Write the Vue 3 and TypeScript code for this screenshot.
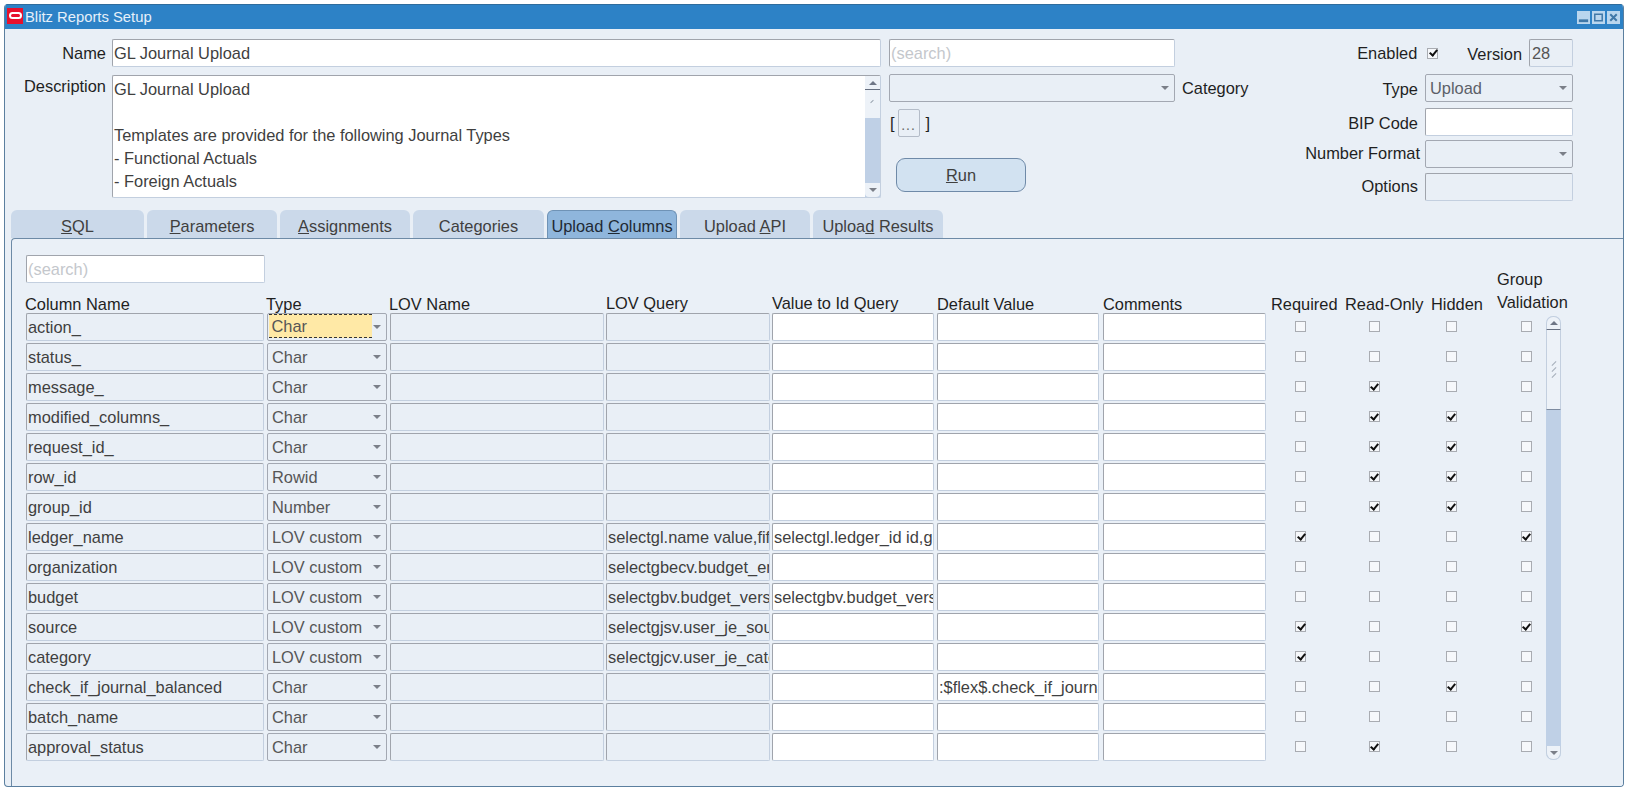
<script setup lang="ts">
interface Row { name: string; type: string; q?: string; v?: string; d?: string; req?: boolean; ro?: boolean; hid?: boolean; grp?: boolean; focus?: boolean }
const rows: Row[] = [
  { name: 'action_', type: 'Char', focus: true },
  { name: 'status_', type: 'Char' },
  { name: 'message_', type: 'Char', ro: true },
  { name: 'modified_columns_', type: 'Char', ro: true, hid: true },
  { name: 'request_id_', type: 'Char', ro: true, hid: true },
  { name: 'row_id', type: 'Rowid', ro: true, hid: true },
  { name: 'group_id', type: 'Number', ro: true, hid: true },
  { name: 'ledger_name', type: 'LOV custom', q: 'selectgl.name value,fifs.id_flex_num', v: 'selectgl.ledger_id id,gl.name value', req: true, grp: true },
  { name: 'organization', type: 'LOV custom', q: 'selectgbecv.budget_entity_name value' },
  { name: 'budget', type: 'LOV custom', q: 'selectgbv.budget_version_id', v: 'selectgbv.budget_version_id id' },
  { name: 'source', type: 'LOV custom', q: 'selectgjsv.user_je_source_name', req: true, grp: true },
  { name: 'category', type: 'LOV custom', q: 'selectgjcv.user_je_category_name', req: true },
  { name: 'check_if_journal_balanced', type: 'Char', d: ':$flex$.check_if_journal_balanced', hid: true },
  { name: 'batch_name', type: 'Char' },
  { name: 'approval_status', type: 'Char', ro: true },
]
const tabs = [
  { pre: '', key: 'S', post: 'QL' },
  { pre: '', key: 'P', post: 'arameters' },
  { pre: '', key: 'A', post: 'ssignments' },
  { pre: 'Categories', key: '', post: '' },
  { pre: 'Upload ', key: 'C', post: 'olumns', active: true },
  { pre: 'Upload ', key: 'A', post: 'PI' },
  { pre: 'Uploa', key: 'd', post: ' Results' },
]
</script>

<template>
  <div class="window">
    <header class="titlebar">
      <span class="logo"><i></i></span>
      <span class="title">Blitz Reports Setup</span>
      <span class="controls">
        <svg width="13" height="13" viewBox="0 0 14 14"><rect width="14" height="14" fill="#b9d6ee"/><rect x="2" y="9" width="10" height="3" fill="#3f78a8"/></svg>
        <svg width="13" height="13" viewBox="0 0 14 14"><rect width="14" height="14" fill="#b9d6ee"/><rect x="3" y="3.5" width="8" height="7" fill="none" stroke="#3f78a8" stroke-width="1.6"/></svg>
        <svg width="13" height="13" viewBox="0 0 14 14"><rect width="14" height="14" fill="#b9d6ee"/><path d="M3.5 3.5l7 7M10.5 3.5l-7 7" stroke="#3f78a8" stroke-width="2.2"/></svg>
      </span>
    </header>

    <section class="form">
      <div class="left">
        <div class="name-row">
          <label class="lbl name-lbl">Name</label>
          <div class="f white name-f">GL Journal Upload</div>
        </div>
        <div class="desc-row">
          <label class="lbl desc-lbl">Description</label>
          <div class="textarea">
            <div class="ta-text">
              <div>GL Journal Upload</div>
              <div class="ta-gap">Templates are provided for the following Journal Types</div>
              <div>- Functional Actuals</div>
              <div>- Foreign Actuals</div>
            </div>
            <div class="ta-scroll">
              <span class="sb-btn up"><i class="arrow-up"></i></span>
              <span class="sb-thumb"><i></i></span>
              <span class="sb-track"></span>
              <span class="sb-btn down"><i class="arrow-down"></i></span>
            </div>
          </div>
        </div>
      </div>

      <div class="mid">
        <div class="f white search">(search)</div>
        <div class="cat-row">
          <div class="f sel cat-sel"><i class="arrow-down"></i></div>
          <label class="lbl cat-lbl">Category</label>
        </div>
        <div class="flex-row">
          <span>[</span><span class="dots">...</span><span class="close">]</span>
        </div>
        <button class="run"><u>R</u>un</button>
      </div>

      <div class="right">
        <div class="r-row top-row">
          <label class="lbl en-lbl">Enabled</label>
          <span class="cb on en-cb"></span>
          <label class="lbl ver-lbl">Version</label>
          <div class="f ver">28</div>
        </div>
        <div class="r-row type-row">
          <label class="lbl">Type</label>
          <div class="f sel r-f">Upload<i class="arrow-down"></i></div>
        </div>
        <div class="r-row bip-row">
          <label class="lbl">BIP Code</label>
          <div class="f white r-f"></div>
        </div>
        <div class="r-row nf-row">
          <label class="lbl nf-lbl">Number Format</label>
          <div class="f sel r-f"><i class="arrow-down"></i></div>
        </div>
        <div class="r-row opt-row">
          <label class="lbl">Options</label>
          <div class="f r-f"></div>
        </div>
      </div>
    </section>

    <nav class="tabs">
      <div v-for="(t, i) in tabs" :key="i" class="tab" :class="{ active: t.active }">{{ t.pre }}<u v-if="t.key">{{ t.key }}</u>{{ t.post }}</div>
    </nav>

    <section class="panel">
      <div class="f white search2">(search)</div>
      <div class="grid-wrap">
        <div class="grid">
          <div class="head">
            <span class="h c-name">Column Name</span>
            <span class="h c-type">Type</span>
            <span class="h c-lov">LOV Name</span>
            <span class="h c-q up2">LOV Query</span>
            <span class="h c-v up2">Value to Id Query</span>
            <span class="h c-d">Default Value</span>
            <span class="h c-c">Comments</span>
            <span class="h c-req">Required</span>
            <span class="h c-ro">Read-Only</span>
            <span class="h c-hid">Hidden</span>
            <span class="h c-grp">Group<br />Validation</span>
          </div>
          <div v-for="r in rows" :key="r.name" class="row">
            <div class="f c-name">{{ r.name }}</div>
            <div class="f sel c-type"><span :class="{ focus: r.focus }">{{ r.type }}</span><i class="arrow-down"></i></div>
            <div class="f c-lov"></div>
            <div class="f c-q clip">{{ r.q }}</div>
            <div class="f white c-v clip">{{ r.v }}</div>
            <div class="f white c-d clip">{{ r.d }}</div>
            <div class="f white c-c"></div>
            <div class="cell c-req"><span class="cb" :class="{ on: r.req }"></span></div>
            <div class="cell c-ro"><span class="cb" :class="{ on: r.ro }"></span></div>
            <div class="cell c-hid"><span class="cb" :class="{ on: r.hid }"></span></div>
            <div class="cell c-grp"><span class="cb" :class="{ on: r.grp }"></span></div>
          </div>
        </div>
        <div class="vscroll">
          <span class="vs-btn vs-up"><i class="arrow-up"></i></span>
          <span class="vs-thumb"><i></i><i></i><i></i></span>
          <span class="vs-track"></span>
          <span class="vs-btn vs-down"><i class="arrow-down"></i></span>
        </div>
      </div>
    </section>
  </div>
</template>

<style>
html, body { margin: 0; background: #fff; }
</style>

<style scoped>
.window {
  box-sizing: border-box;
  width: 1620px;
  height: 783px;
  margin: 4px 0 0 4px;
  background: #e9eff6;
  border: 1px solid #5b7f9f;
  border-top: 0;
  border-radius: 4px 4px 4px 4px;
  font-family: "Liberation Sans", Arial, sans-serif;
  font-size: 16.4px;
  color: #3a3a3a;
  overflow: hidden;
}
.titlebar {
  height: 25px;
  background: #2d82c6;
  display: flex;
  align-items: center;
  color: #e6f0fa;
  font-size: 14.8px;
  border-top: 1px solid #2f6c9c;
  box-sizing: border-box;
  padding-right: 3px;
}
.logo {
  width: 16px;
  height: 16px;
  background: #e8112d;
  margin: -3px 2px 0 2px;
  display: flex;
  align-items: flex-start;
  justify-content: center;
  padding-top: 4px;
  box-sizing: border-box;
}
.logo i {
  display: block;
  width: 13px;
  height: 7px;
  border: 2px solid #fff;
  border-radius: 5px;
  box-sizing: border-box;
}
.title { flex: 1; }
.controls { display: flex; gap: 2px; }
.controls svg { display: block; }

.f {
  box-sizing: border-box;
  height: 28px;
  line-height: 26px;
  padding: 0 1px;
  border: 1.5px solid #c3cfdf;
  border-top-color: #a0a4ac;
  border-left-color: #a0a4ac;
  border-radius: 2px;
  background: #e9eff6;
  color: #3f3f3f;
  white-space: nowrap;
  position: relative;
}
.white { background: #fff; }
.sel {
  padding-left: 4px;
  color: #565656;
  border-color: #a3a8b2;
}
.sel .arrow-down { position: absolute; right: 5px; top: 11px; }
.arrow-down, .arrow-up {
  display: block;
  width: 0;
  height: 0;
  border-left: 4px solid transparent;
  border-right: 4px solid transparent;
}
.arrow-down { border-top: 4px solid #7b7f88; }
.arrow-up { border-bottom: 4px solid #6f7686; }
.clip { overflow: hidden; }
.lbl { color: #1f1f1f; white-space: nowrap; }

.form {
  display: flex;
  height: 181px;
  box-sizing: border-box;
  padding-top: 10px;
}
.left { width: 876px; margin-left: 0; }
.name-row, .desc-row { display: flex; }
.name-lbl { width: 101px; text-align: right; margin-right: 6px; line-height: 29px; }
.desc-lbl { width: 101px; text-align: right; margin-right: 6px; line-height: 23px; }
.name-f { width: 769px; }
.desc-row { margin-top: 7px; }
.textarea {
  width: 769px;
  height: 123px;
  box-sizing: border-box;
  display: flex;
  background: #fff;
  border: 1.5px solid #c3cfdf;
  border-top-color: #a0a4ac;
  border-left-color: #a0a4ac;
  border-radius: 2px;
}
.ta-text { flex: 1; padding: 2px 1px; line-height: 23px; color: #3f3f3f; }
.ta-gap { margin-top: 23px; }
.ta-scroll {
  width: 15px;
  display: flex;
  flex-direction: column;
  background: #bfd0e6;
}
.sb-btn { height: 13px; display: flex; align-items: center; justify-content: center; background: #edf2f8; flex: none; }
.sb-btn.up { border-bottom: 1px solid #666f80; }
.sb-btn.down { height: 14px; border-radius: 0 0 4px 4px; }
.sb-thumb { height: 28px; background: #edf2f8; position: relative; flex: none; }
.sb-thumb i { position: absolute; left: 5px; top: 11px; width: 4px; height: 1px; background: #9aa3b0; transform: rotate(-45deg); }
.sb-track { flex: 1; }

.mid { width: 396px; margin-left: 8px; }
.search { width: 286px; color: #c4c7cc; }
.cat-row { display: flex; margin-top: 7px; }
.cat-sel { width: 286px; }
.cat-lbl { margin-left: 7px; line-height: 28px; }
.flex-row { display: flex; align-items: center; height: 28px; margin-top: 7px; color: #1f1f1f; padding-left: 1px; }
.dots {
  box-sizing: border-box;
  width: 22px;
  height: 28px;
  margin-left: 3px;
  border: 1px solid #b4bcc8;
  border-radius: 2px;
  text-align: center;
  line-height: 31px;
  font-size: 14px;
  letter-spacing: 1px;
  color: #666;
}
.close { margin-left: 6px; }
.run {
  display: block;
  box-sizing: border-box;
  width: 130px;
  height: 34px;
  margin: 21px 0 0 7px;
  background: #d2e2f1;
  border: 1px solid #6f8aa8;
  border-radius: 9px;
  font: inherit;
  color: #3f3f3f;
  padding: 0;
}

.right { flex: 1; display: flex; flex-direction: column; position: relative; }
.r-row { display: flex; justify-content: flex-end; padding-right: 50px; align-items: center; height: 28px; }
.r-row .lbl { margin-right: 7px; position: relative; top: 1px; }
.r-f { width: 148px; }
.type-row { margin-top: 7px; }
.bip-row { margin-top: 6px; }
.nf-row { margin-top: 4px; }
.opt-row { margin-top: 5px; }
.r-row .nf-lbl { left: 2px; top: -1px; }
.opt-row .lbl { top: -1px; }
.r-row .en-lbl { margin-right: 10px; top: 0; }
.en-cb { margin-right: 29px; }
.r-row .ver-lbl { margin-right: 7px; }
.ver { width: 44px; color: #555; padding-left: 2px; }
.type-row .f { color: #5c6068; }

.tabs {
  display: flex;
  gap: 3px;
  padding-left: 6px;
  height: 28px;
  margin-top: 0;
}
.tab {
  box-sizing: border-box;
  width: 130px;
  height: 28px;
  text-align: center;
  line-height: 32px;
  background: #cbd9ea;
  border-radius: 6px 6px 0 0;
  color: #3f3f3f;
}
.tab:first-child { width: 133px; }
.tab:nth-child(4) { width: 131px; }
.tab.active {
  background: #8fb6dc;
  border: 1px solid #6f93b6;
  border-bottom: 0;
  line-height: 30px;
  color: #1f2a35;
}

.panel {
  box-sizing: border-box;
  margin-left: 6px;
  height: 549px;
  border-top: 1px solid #6d8aa6;
  border-left: 1px solid #6d8aa6;
  border-top-left-radius: 4px;
  padding: 16px 0 0 14px;
  background: #eaf0f7;
}
.search2 { width: 239px; color: #c4c7cc; }
.grid-wrap { display: flex; }
.grid { width: 1520px; flex: none; }
.head {
  display: flex;
  height: 30px;
  align-items: flex-end;
  color: #1f1f1f;
  margin-left: -1px;
  position: relative;
}
.h { white-space: nowrap; line-height: 24px; margin-bottom: -3px; flex: none; }
.h.up2 { position: relative; top: -1px; }
.row { display: flex; height: 28px; margin-bottom: 2px; }
.c-name { width: 238px; margin-right: 3px; flex: none; }
.c-type { width: 120px; margin-right: 3px; flex: none; }
.c-lov { width: 214px; margin-right: 2px; flex: none; }
.c-q { width: 164px; margin-right: 2px; flex: none; }
.c-v { width: 162px; margin-right: 3px; flex: none; }
.c-d { width: 162px; margin-right: 4px; flex: none; }
.c-c { width: 163px; flex: none; }
.cell { display: flex; justify-content: center; align-items: center; flex: none; margin-top: -1px; }
.c-req { width: 69px; }
.c-ro { width: 78px; }
.c-hid { width: 76px; }
.c-grp { width: 40px; margin-left: 17px; }
.head .c-req { margin-left: 5px; width: 73px; }
.head .c-ro { width: 85px; padding-left: 1px; box-sizing: border-box; }
.head .c-hid { width: 68px; padding-left: 2px; box-sizing: border-box; }
.head .c-grp { width: 74px; margin-left: 0; line-height: 23px; margin-bottom: -1px; }
.head .c-name { margin-right: 2px; width: 239px; }
.head .c-lov { margin-right: 3px; }
.focus {
  display: block;
  width: 103px;
  height: 24px;
  margin: 0 0 0 -3.5px;
  padding-left: 3px;
  box-sizing: border-box;
  background: #ffe9a6;
  border-top: 1px dashed #333;
  border-bottom: 1px dashed #333;
  line-height: 22px;
  color: #565656;
}
.cb {
  display: block;
  box-sizing: border-box;
  width: 11px;
  height: 11px;
  background: #f6f8fb;
  border: 1px solid #a9acb2;
  position: relative;
}
.cb.on::after {
  content: "";
  position: absolute;
  left: 2.5px;
  top: -0.5px;
  width: 3px;
  height: 6px;
  border: solid #111;
  border-width: 0 2.2px 2.2px 0;
  transform: rotate(40deg);
}
.vscroll {
  width: 15px;
  margin: 33px 0 0 0;
  height: 444px;
  display: flex;
  flex-direction: column;
  flex: none;
  background: #bfd0e6;
  border-radius: 7px;
  overflow: hidden;
}
.vs-btn { display: flex; align-items: center; justify-content: center; background: #edf2f8; flex: none; box-sizing: border-box; }
.vs-up { height: 14px; border: 1px solid #c3cfdf; border-bottom-color: #666f80; border-radius: 7px 7px 0 0; }
.vs-down { height: 14px; border: 1px solid #c3cfdf; border-top: 0; border-radius: 0 0 7px 7px; }
.vs-thumb {
  height: 80px;
  flex: none;
  background: #edf2f8;
  border-left: 1px solid #c3cfdf;
  border-right: 1px solid #c3cfdf;
  border-bottom: 1px solid #7d8ba0;
  box-sizing: border-box;
  display: flex;
  flex-direction: column;
  align-items: center;
  justify-content: center;
  gap: 5px;
}
.vs-thumb i { width: 6px; height: 1px; background: #a6afbb; transform: rotate(-45deg); }
.vs-track { flex: 1; }
</style>
